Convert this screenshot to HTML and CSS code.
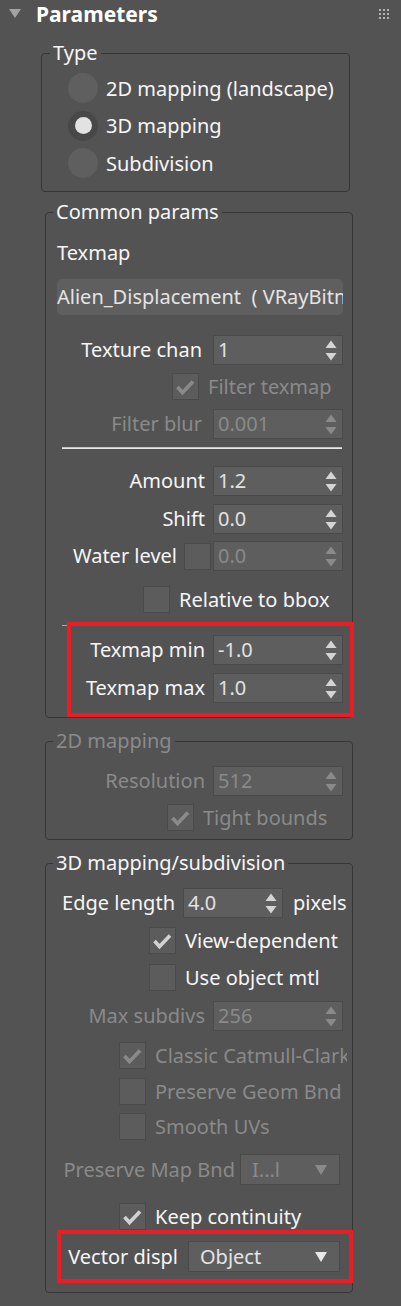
FILE: index.html
```html
<!DOCTYPE html>
<html>
<head>
<meta charset="utf-8">
<link rel="stylesheet" href="styles.css">
</head>
<body>
<div class="panel">
  <div class="head">
    <span class="tri"></span>
    <span class="title">Parameters</span>
    <span class="grip"><i></i><i></i><i></i><i></i><i></i><i></i><i></i><i></i><i></i></span>
  </div>

  <fieldset class="group g-type">
    <legend>Type</legend>
    <div class="radios">
      <div class="radio"><span class="dot"></span><span>2D mapping (landscape)</span></div>
      <div class="radio on"><span class="dot"></span><span>3D mapping</span></div>
      <div class="radio"><span class="dot"></span><span>Subdivision</span></div>
    </div>
  </fieldset>

  <fieldset class="group g-common">
    <legend>Common params</legend>
    <div class="plain-label">Texmap</div>
    <div class="map-btn">Alien_Displacement  ( VRayBitmap )</div>

    <div class="srow mt20">
      <span class="lbl narrow">Texture chan</span>
      <div class="spin"><span class="val">1</span><svg class="arr" width="12" height="21" viewBox="0 0 12 21"><polygon points="0.5,8 6,0.5 11.5,8"/><polygon points="0.5,13 11.5,13 6,20.5"/></svg></div>
    </div>

    <div class="crow mt8 dis in118">
      <span class="cb"><svg width="27" height="27" viewBox="0 0 27 27"><polyline points="5.5,14 10.5,19.5 21,8.5"/></svg></span>
      <span class="ctext">Filter texmap</span>
    </div>

    <div class="srow mt9 dis">
      <span class="lbl narrow">Filter blur</span>
      <div class="spin"><span class="val">0.001</span><svg class="arr" width="12" height="21" viewBox="0 0 12 21"><polygon points="0.5,8 6,0.5 11.5,8"/><polygon points="0.5,13 11.5,13 6,20.5"/></svg></div>
    </div>

    <div class="sep mt8"></div>

    <div class="srow mt17">
      <span class="lbl">Amount</span>
      <div class="spin"><span class="val">1.2</span><svg class="arr" width="12" height="21" viewBox="0 0 12 21"><polygon points="0.5,8 6,0.5 11.5,8"/><polygon points="0.5,13 11.5,13 6,20.5"/></svg></div>
    </div>

    <div class="srow mt8">
      <span class="lbl">Shift</span>
      <div class="spin"><span class="val">0.0</span><svg class="arr" width="12" height="21" viewBox="0 0 12 21"><polygon points="0.5,8 6,0.5 11.5,8"/><polygon points="0.5,13 11.5,13 6,20.5"/></svg></div>
    </div>

    <div class="srow mt7">
      <span class="lbl water">Water level</span>
      <span class="cb water-cb"></span>
      <div class="spin dis"><span class="val">0.0</span><svg class="arr" width="12" height="21" viewBox="0 0 12 21"><polygon points="0.5,8 6,0.5 11.5,8"/><polygon points="0.5,13 11.5,13 6,20.5"/></svg></div>
    </div>

    <div class="crow mt15 in89">
      <span class="cb"></span>
      <span class="ctext">Relative to bbox</span>
    </div>

    <div class="sep thin mt12"></div>

    <div class="hl hl-a mt9">
      <div class="srow">
        <span class="lbl">Texmap min</span>
        <div class="spin"><span class="val">-1.0</span><svg class="arr" width="12" height="21" viewBox="0 0 12 21"><polygon points="0.5,8 6,0.5 11.5,8"/><polygon points="0.5,13 11.5,13 6,20.5"/></svg></div>
      </div>
      <div class="srow mt8">
        <span class="lbl">Texmap max</span>
        <div class="spin"><span class="val">1.0</span><svg class="arr" width="12" height="21" viewBox="0 0 12 21"><polygon points="0.5,8 6,0.5 11.5,8"/><polygon points="0.5,13 11.5,13 6,20.5"/></svg></div>
      </div>
    </div>
  </fieldset>

  <fieldset class="group g-2d dis">
    <legend>2D mapping</legend>
    <div class="srow mt13">
      <span class="lbl">Resolution</span>
      <div class="spin"><span class="val">512</span><svg class="arr" width="12" height="21" viewBox="0 0 12 21"><polygon points="0.5,8 6,0.5 11.5,8"/><polygon points="0.5,13 11.5,13 6,20.5"/></svg></div>
    </div>
    <div class="crow mt8 in113">
      <span class="cb"><svg width="27" height="27" viewBox="0 0 27 27"><polyline points="5.5,14 10.5,19.5 21,8.5"/></svg></span>
      <span class="ctext">Tight bounds</span>
    </div>
  </fieldset>

  <fieldset class="group g-3d">
    <legend>3D mapping/subdivision</legend>
    <div class="erow mt13">
      <span class="lbl">Edge length</span>
      <div class="spin"><span class="val">4.0</span><svg class="arr" width="12" height="21" viewBox="0 0 12 21"><polygon points="0.5,8 6,0.5 11.5,8"/><polygon points="0.5,13 11.5,13 6,20.5"/></svg></div>
      <span class="unit">pixels</span>
    </div>

    <div class="crow mt9 in95">
      <span class="cb"><svg width="27" height="27" viewBox="0 0 27 27"><polyline points="5.5,14 10.5,19.5 21,8.5"/></svg></span>
      <span class="ctext">View-dependent</span>
    </div>
    <div class="crow mt10 in95">
      <span class="cb"></span>
      <span class="ctext">Use object mtl</span>
    </div>

    <div class="srow mt10 dis">
      <span class="lbl">Max subdivs</span>
      <div class="spin"><span class="val">256</span><svg class="arr" width="12" height="21" viewBox="0 0 12 21"><polygon points="0.5,8 6,0.5 11.5,8"/><polygon points="0.5,13 11.5,13 6,20.5"/></svg></div>
    </div>

    <div class="crow mt11 in65 dis clip">
      <span class="cb"><svg width="27" height="27" viewBox="0 0 27 27"><polyline points="5.5,14 10.5,19.5 21,8.5"/></svg></span>
      <span class="ctext">Classic Catmull-Clark</span>
    </div>
    <div class="crow mt9 in65 dis">
      <span class="cb"></span>
      <span class="ctext">Preserve Geom Bnd</span>
    </div>
    <div class="crow mt8 in65 dis">
      <span class="cb"></span>
      <span class="ctext">Smooth UVs</span>
    </div>

    <div class="drow mt14 dis">
      <span class="lbl dl-pm">Preserve Map Bnd</span>
      <div class="drop w100"><span class="val">I...l</span><svg class="darr" width="12" height="10" viewBox="0 0 12 10"><polygon points="0,0 12,0 6,10"/></svg></div>
    </div>

    <div class="crow mt18 in65">
      <span class="cb"><svg width="27" height="27" viewBox="0 0 27 27"><polyline points="5.5,14 10.5,19.5 21,8.5"/></svg></span>
      <span class="ctext">Keep continuity</span>
    </div>

    <div class="hl hl-b mt11">
      <div class="drow">
        <span class="lbl dl-vd">Vector displ</span>
        <div class="drop w152"><span class="val">Object</span><svg class="darr" width="12" height="10" viewBox="0 0 12 10"><polygon points="0,0 12,0 6,10"/></svg></div>
      </div>
    </div>
  </fieldset>
</div>
</body>
</html>
```

FILE: styles.css
```css
* { box-sizing: border-box; }
html, body { margin: 0; padding: 0; }
body {
  background: #535353;
  width: 401px;
  height: 1306px;
  overflow: hidden;
  font-family: "Noto Sans", "Open Sans", sans-serif;
  font-size: 20px;
  color: #f6f6f6;
}

/* rollout header */
.head { display: flex; align-items: center; height: 28px; }
.tri {
  width: 0; height: 0;
  border-left: 6px solid transparent;
  border-right: 6px solid transparent;
  border-top: 9px solid #a2a2a2;
  margin-left: 9px;
  margin-top: -2px;
}
.title { font-weight: 700; font-size: 21px; line-height: 28px; margin-left: 15px; color: #ffffff; }
.grip {
  margin-left: auto;
  margin-right: 12px;
  display: grid;
  grid-template-columns: repeat(3, 2px);
  grid-auto-rows: 2px;
  gap: 2px;
}
.grip i { display: block; width: 2px; height: 2px; background: #b4b4b4; }

/* group boxes */
.group {
  border: 1px solid #363636;
  border-radius: 4px;
  padding: 0 8px;
  min-width: 0;
}
.group legend { padding: 0 3px; line-height: 24px; }
.g-type { margin: 13px 0 0 41px; width: 309px; padding-bottom: 13px; }
.g-common { margin: 8px 0 0 45px; width: 308px; padding-bottom: 14px; }
.g-2d { margin: 11px 0 0 45px; width: 308px; padding-bottom: 8px; }
.g-3d { margin: 11px 0 0 45px; width: 308px; padding-bottom: 20px; }
.g-common legend, .g-2d legend, .g-3d legend { margin-left: -1px; }

.dis { color: #8a8a8a; }
.g-2d legend { color: #8a8a8a; }

/* radios */
.radios { padding-top: 8px; display: flex; flex-direction: column; gap: 7.5px; }
.radio { display: flex; align-items: center; height: 30px; margin-left: 18px; gap: 8px; }
.dot { width: 30px; height: 30px; border-radius: 50%; background: #5f5f5f; display: flex; align-items: center; justify-content: center; }
.radio.on .dot { background: #484848; }
.radio.on .dot::after { content: ""; width: 17px; height: 17px; border-radius: 50%; background: #e2e2e2; }

/* texmap */
.plain-label { margin-top: 17px; line-height: 24px; padding-left: 3px; }
.map-btn {
  margin-top: 14px;
  margin-left: 3px;
  width: 286px;
  height: 36px;
  line-height: 36px;
  background: #5f5f5f;
  border-radius: 5px;
  overflow: hidden;
  white-space: pre;
  color: #e4e4e4;
}

/* spinner rows */
.srow { display: flex; justify-content: flex-end; align-items: center; height: 30px; padding-right: 1px; }
.lbl { margin-right: 8px; white-space: nowrap; line-height: 30px; }
.lbl.narrow { margin-right: 11px; }
.lbl.water { margin-right: 7px; }
.water-cb { margin-right: 2px; }

.spin {
  width: 130px;
  height: 30px;
  background: #5e5e5e;
  border: 1px solid #4a4a4a;
  display: flex;
  align-items: center;
  justify-content: space-between;
  padding: 0 5px 0 4px;
  color: #e2e2e2;
}
.spin .val { line-height: 28px; }
.arr { fill: #d4d4d4; display: block; }
.dis .spin, .spin.dis { color: #8a8a8a; }
.dis .arr, .spin.dis .arr { fill: #8a8a8a; }

/* checkbox rows */
.crow { display: flex; align-items: center; height: 27px; gap: 9px; }
.cb {
  flex: none;
  width: 27px;
  height: 27px;
  background: #5c5c5c;
  border: 1px solid #4a4a4a;
  display: block;
  position: relative;
}
.cb svg { display: block; margin: -1px; }
.cb polyline { fill: none; stroke: #d2d2d2; stroke-width: 3.6; stroke-linejoin: miter; stroke-linecap: butt; }
.dis .cb polyline { stroke: #8a8a8a; }
.ctext { white-space: nowrap; line-height: 27px; }
.crow.clip { width: 293px; overflow: hidden; }
.in118 { padding-left: 118px; }
.in113 { padding-left: 113px; }
.in95 { padding-left: 95px; }
.in89 { padding-left: 89px; }
.in65 { padding-left: 65px; }

/* separators */
.sep { height: 2px; margin-left: 8px; width: 280px; background: #e8e8e8; border-top: 1px solid #c4c4c4; }
.sep.thin { height: 1px; border-top: 0; background: #a8a8a8; }

/* edge length row */
.erow { display: grid; grid-template-columns: 129px 100px 1fr; align-items: center; height: 30px; }
.erow .lbl { text-align: right; margin-right: 0; padding-right: 8px; }
.erow .spin { width: 100px; }
.unit { padding-left: 10px; white-space: nowrap; line-height: 30px; }

/* dropdown rows */
.drow { display: flex; justify-content: flex-end; align-items: center; height: 31px; padding-right: 4px; }
.dl-pm { margin-right: 5px; }
.dl-vd { margin-right: 10px; }
.drop {
  height: 31px;
  background: #5e5e5e;
  border: 1px solid #4a4a4a;
  display: flex;
  align-items: center;
  justify-content: space-between;
  padding: 0 12px 0 11px;
  color: #e4e4e4;
}
.drop .val { line-height: 29px; }
.w100 { width: 100px; }
.w152 { width: 152px; }
.darr { fill: #e8e8e8; display: block; }
.dis .drop { color: #8a8a8a; }
.dis .darr { fill: #8a8a8a; }

/* highlight annotations */
.hl { position: relative; }
.hl::after {
  content: "";
  position: absolute;
  border: 4px solid #ed1c24;
  pointer-events: none;
}
.hl-a::after { top: -13px; bottom: -14px; left: 13px; right: -10px; }
.hl-b::after { top: -11px; bottom: -11px; left: 3px; right: -9px; }

/* spacing utilities */
.mt7 { margin-top: 7px; }
.mt8 { margin-top: 8px; }
.mt9 { margin-top: 9px; }
.mt10 { margin-top: 10px; }
.mt11 { margin-top: 11px; }
.mt12 { margin-top: 12px; }
.mt13 { margin-top: 13px; }
.mt14 { margin-top: 14px; }
.mt15 { margin-top: 15px; }
.mt17 { margin-top: 17px; }
.mt18 { margin-top: 18px; }
.mt20 { margin-top: 20px; }
```
